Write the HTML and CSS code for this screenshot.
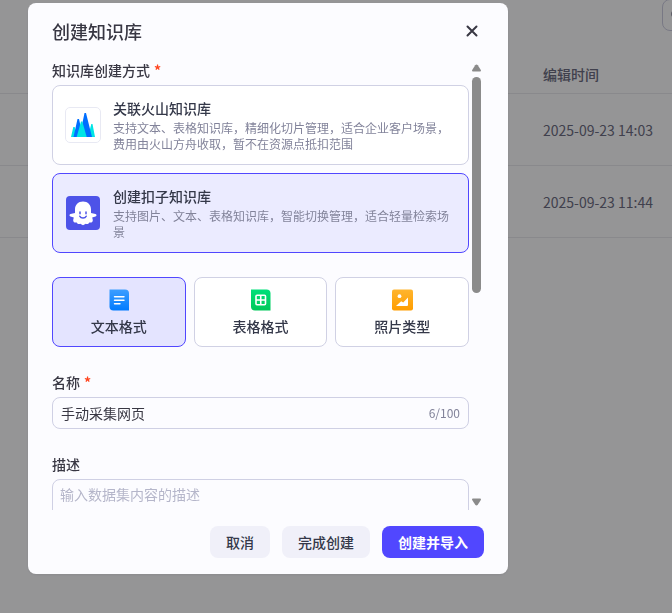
FILE: index.html
```html
<!DOCTYPE html>
<html lang="zh-CN">
<head>
    <meta charset="UTF-8">
    <meta name="viewport" content="width=device-width, initial-scale=1">
    <title>创建知识库</title>
    <link rel="stylesheet" href="styles.css">
</head>
<body>
    <main class="page">
        <div class="toolbar">
            <button type="button" class="filter">
                <svg width="16" height="16" viewBox="0 0 16 16" fill="none" stroke="currentColor" stroke-width="1.500"><circle cx="7" cy="7" r="5"/><path d="M11 11l4 4"/></svg>
            </button>
        </div>
        <table class="list">
            <thead>
                <tr><th></th><th>编辑时间</th></tr>
            </thead>
            <tbody>
                <tr><td></td><td>2025-09-23 14:03</td></tr>
                <tr><td></td><td>2025-09-23 11:44</td></tr>
            </tbody>
        </table>
    </main>

    <div class="mask">
        <form class="modal" role="dialog" aria-labelledby="modal-title">
            <header class="modal-header">
                <h2 id="modal-title">创建知识库</h2>
                <button type="button" class="close">
                    <svg width="24" height="24" viewBox="0 0 24 24" fill="none" stroke="currentColor" stroke-width="2" stroke-linecap="round"><path d="M7.500 7.500l9 9M16.500 7.500l-9 9"/></svg>
                </button>
            </header>

            <div class="modal-body">
                <div class="fields">
                    <fieldset class="group">
                        <legend class="label">知识库创建方式<span class="required">*</span></legend>
                        <div class="sources">
                            <label class="source">
                                <input type="radio" name="source" value="volcano">
                                <svg class="source-icon" width="36" height="36" viewBox="0 0 36 36">
                                    <rect x=".5" y=".5" width="35" height="35" rx="4.5" fill="#fff" stroke="#e8e9f3"/>
                                    <path d="M6 30l2.300-10h1.400L12 30zM23 30l3.300-13h1.200L30 30z" fill="#00e5e5"/>
                                    <path d="M8.500 30l4-18H14l4 18zM14.500 30l5-24H21l6 24z" fill="#006eff"/>
                                    <path d="M11.700 30L16 14.500h1.300L21.700 30z" fill="#00e5e5"/>
                                </svg>
                                <span class="source-text">
                                    <span class="source-title">关联火山知识库</span>
                                    <span class="source-desc">支持文本、表格知识库，精细化切片管理，适合企业客户场景，费用由火山方舟收取，暂不在资源点抵扣范围</span>
                                </span>
                            </label>
                            <label class="source">
                                <input type="radio" name="source" value="coze" checked>
                                <svg class="source-icon" width="36" height="36" viewBox="0 0 36 36">
                                    <rect x="1" y="1" width="34" height="34" rx="4" fill="#4d53e8"/>
                                    <path d="M18 6.500c-4.800 0-8 3.500-8 8v3.500l-4.500.9c-1.400.5-1.300 2.200 0 2.600l3.300 1.100-.6 2.400c-.2 2 1.600 3 3.500 2.400.8 1.500 2.200 2.100 3.500 1.300l2.800 1.600 2.800-1.600c1.300.8 2.700.2 3.500-1.300 1.900.6 3.700-.4 3.500-2.400l-.6-2.400 3.300-1.100c1.300-.4 1.400-2.100 0-2.600l-4.500-.9v-3.500c0-4.500-3.200-8-8-8z" fill="#fff"/>
                                    <path d="M15 17v1.800M21 17v1.800M14.800 21.200c1.200 2.500 5.200 2.500 6.400 0" fill="none" stroke="#4d53e8" stroke-width="1.500" stroke-linecap="round"/>
                                </svg>
                                <span class="source-text">
                                    <span class="source-title">创建扣子知识库</span>
                                    <span class="source-desc">支持图片、文本、表格知识库，智能切换管理，适合轻量检索场景</span>
                                </span>
                            </label>
                        </div>
                    </fieldset>

                    <div class="formats">
                        <label class="format">
                            <input type="radio" name="format" value="text" checked>
                            <svg width="24" height="24" viewBox="0 0 24 24">
                                <defs><linearGradient id="blue" x2="0" y2="1"><stop stop-color="#3d9eff"/><stop offset="1" stop-color="#007bff"/></linearGradient></defs>
                                <path d="M2.500 2.500H18a4 4 0 0 1 4 4v17H6.500a4 4 0 0 1-4-4z" fill="url(#blue)"/>
                                <path d="M7.500 9.800h9.500M7.500 13.300h9.500M7.500 16.800h5.500" stroke="#fff" stroke-width="1.400" stroke-linecap="round"/>
                            </svg>
                            文本格式
                        </label>
                        <label class="format">
                            <input type="radio" name="format" value="table">
                            <svg width="24" height="24" viewBox="0 0 24 24">
                                <defs><linearGradient id="green" x2="0" y2="1"><stop stop-color="#00e07a"/><stop offset="1" stop-color="#00c85a"/></linearGradient></defs>
                                <path d="M3 2.500h15.500a4 4 0 0 1 4 4v17H7a4 4 0 0 1-4-4z" fill="url(#green)"/>
                                <path d="M9 8.200h7.500a1 1 0 0 1 1 1v7.600a1 1 0 0 1-1 1H9a1 1 0 0 1-1-1V9.200a1 1 0 0 1 1-1zM12.750 8.200v9.600M8 13h9.500" fill="none" stroke="#fff" stroke-width="1.600"/>
                            </svg>
                            表格格式
                        </label>
                        <label class="format">
                            <input type="radio" name="format" value="image">
                            <svg width="24" height="24" viewBox="0 0 24 24">
                                <defs><linearGradient id="orange" x2="0" y2="1"><stop stop-color="#ffb52e"/><stop offset="1" stop-color="#ff9d00"/></linearGradient></defs>
                                <rect x="2" y="2.500" width="21" height="21" rx="2" fill="url(#orange)"/>
                                <circle cx="9.500" cy="9.200" r="1.900" fill="#fff"/>
                                <path d="M6 19l5.200-4.800 2 1.300L18 10.500V18a1 1 0 0 1-1 1z" fill="#fff"/>
                            </svg>
                            照片类型
                        </label>
                    </div>

                    <div class="group">
                        <label class="label" for="name">名称<span class="required">*</span></label>
                        <div class="input-box">
                            <input type="text" id="name" maxlength="100" value="手动采集网页">
                            <span class="count">6/100</span>
                        </div>
                    </div>

                    <div class="group">
                        <label class="label" for="desc">描述</label>
                        <textarea id="desc" rows="4" placeholder="输入数据集内容的描述"></textarea>
                    </div>
                </div>

                <div class="scrollbar" aria-hidden="true">
                    <svg width="9" height="8" viewBox="0 0 9 8"><path d="M3.200 1.200q1.300-1.600 2.600 0L8.800 6q.6 1.500-.8 1.500H1Q-.4 7.500.2 6z" fill="#8b8b8b"/></svg>
                    <div class="track"><div class="thumb"></div></div>
                    <svg width="9" height="8" viewBox="0 0 9 8"><path d="M3.200 6.800q1.300 1.600 2.600 0L8.800 2q.6-1.500-.8-1.500H1Q-.4.500.2 2z" fill="#8b8b8b"/></svg>
                </div>
            </div>

            <footer class="modal-footer">
                <button type="button" class="btn">取消</button>
                <button type="button" class="btn">完成创建</button>
                <button type="submit" class="btn primary">创建并导入</button>
            </footer>
        </form>
    </div>
</body>
</html>
```
FILE: styles.css
```css
* {
    box-sizing: border-box;
}

body {
    margin: 0;
    height: 100vh;
    overflow: hidden;
    background-color: #f9f9fb;
    font-family: "Noto Sans CJK SC", sans-serif;
    font-size: 14px;
    line-height: 22px;
    color: #383743;
}

button, input, textarea {
    font: inherit;
    color: inherit;
}

button {
    border: none;
    padding: 0;
    cursor: pointer;
}

/* list behind the dialog */
.page {
    overflow: hidden;
}

.toolbar {
    display: flex;
    justify-content: flex-end;
    height: 56px;
    margin-top: -1px;
    margin-right: -150px;
}

.filter {
    display: flex;
    align-items: center;
    width: 160px;
    height: 32px;
    padding: 0 7px;
    border: 1px solid #c9c9dd;
    border-radius: 8px;
    background: none;
    color: #777789;
}

.list {
    width: 100%;
    border-collapse: collapse;
    table-layout: fixed;
}

.list th, .list td {
    padding: 2px 0 0;
    height: 72px;
    border-bottom: 1px solid #e4e4ea;
    text-align: left;
    font-weight: 400;
    color: #6b6b80;
}

.list th {
    height: 38px;
    padding: 0;
    font-weight: 500;
}

.list th:last-child {
    width: 129px;
}

/* dialog */
.mask {
    position: fixed;
    inset: 0;
    padding: 3px 28px;
    background-color: rgba(0, 0, 0, 0.4);
}

.modal {
    max-width: 480px;
    padding: 0 24px;
    border-radius: 8px;
    background-color: #fcfcff;
    box-shadow: 0 1px 3px rgba(0, 0, 0, 0.08);
}

.modal-header {
    display: flex;
    align-items: center;
    justify-content: space-between;
    height: 56px;
}

.modal-header h2 {
    margin: 0;
    font-size: 18px;
    font-weight: 500;
}

.close {
    display: flex;
    background: none;
}

.modal-body {
    display: flex;
    height: calc(100vh - 162px);
    overflow: hidden;
}

.fields {
    flex: 1;
    display: flex;
    flex-direction: column;
    gap: 24px;
    min-width: 0;
}

.group {
    margin: 0;
    padding: 0;
    border: none;
}

.label {
    display: block;
    margin-bottom: 4px;
    padding: 0;
    font-weight: 500;
}

.required {
    margin-left: 4px;
    font-weight: 700;
    color: #ff441e;
}

.sources {
    display: flex;
    flex-direction: column;
    gap: 8px;
}

.source, .format {
    border: 1px solid #d0d1e4;
    border-radius: 8px;
    background-color: #fff;
    color: #343849;
    cursor: pointer;
}

.source input, .format input {
    position: absolute;
    opacity: 0;
    pointer-events: none;
}

.source {
    display: flex;
    align-items: center;
    gap: 12px;
    padding: 12px;
}

.source:has(:checked) {
    border-color: #5147ff;
    background-color: #ebebff;
}

.source-icon {
    flex: none;
}

.source-title, .source-desc {
    display: block;
}

.source-title {
    margin-bottom: 2px;
    line-height: 20px;
    font-weight: 500;
}

.source-desc {
    font-size: 12px;
    line-height: 16px;
    color: #82839a;
}

.formats {
    display: grid;
    grid-template-columns: repeat(3, 1fr);
    gap: 8px;
}

.format {
    display: flex;
    flex-direction: column;
    align-items: center;
    gap: 4px;
    padding: 9px;
    font-weight: 500;
}

.format:has(:checked) {
    border-color: #5147ff;
    background-color: #e4e4ff;
}

.input-box, textarea {
    width: 100%;
    border: 1px solid #cfd0e4;
    border-radius: 8px;
    background: none;
}

.input-box {
    display: flex;
    align-items: center;
    height: 32px;
    padding: 0 8px;
}

.input-box input {
    flex: 1;
    min-width: 0;
    padding: 0;
    border: none;
    outline: none;
    background: none;
}

.count {
    font-size: 12px;
    color: #82839a;
}

textarea {
    display: block;
    padding: 3px 7px;
    resize: none;
}

textarea::placeholder {
    color: #b5b6ca;
}

.scrollbar {
    display: flex;
    flex-direction: column;
    align-items: center;
    gap: 5px;
    width: 15px;
    padding: 5px 0 4px;
}

.track {
    flex: 1;
    width: 9px;
}

.thumb {
    height: 52%;
    border-radius: 5px;
    background-color: #8b8b8b;
}

.modal-footer {
    display: flex;
    justify-content: flex-end;
    gap: 12px;
    padding: 16px 0;
}

.btn {
    height: 32px;
    padding: 0 16px;
    border-radius: 8px;
    background-color: #f0f0f9;
    color: #343849;
    font-weight: 500;
}

.primary {
    background-color: #5147ff;
    color: #fff;
    font-weight: 700;
}
```
